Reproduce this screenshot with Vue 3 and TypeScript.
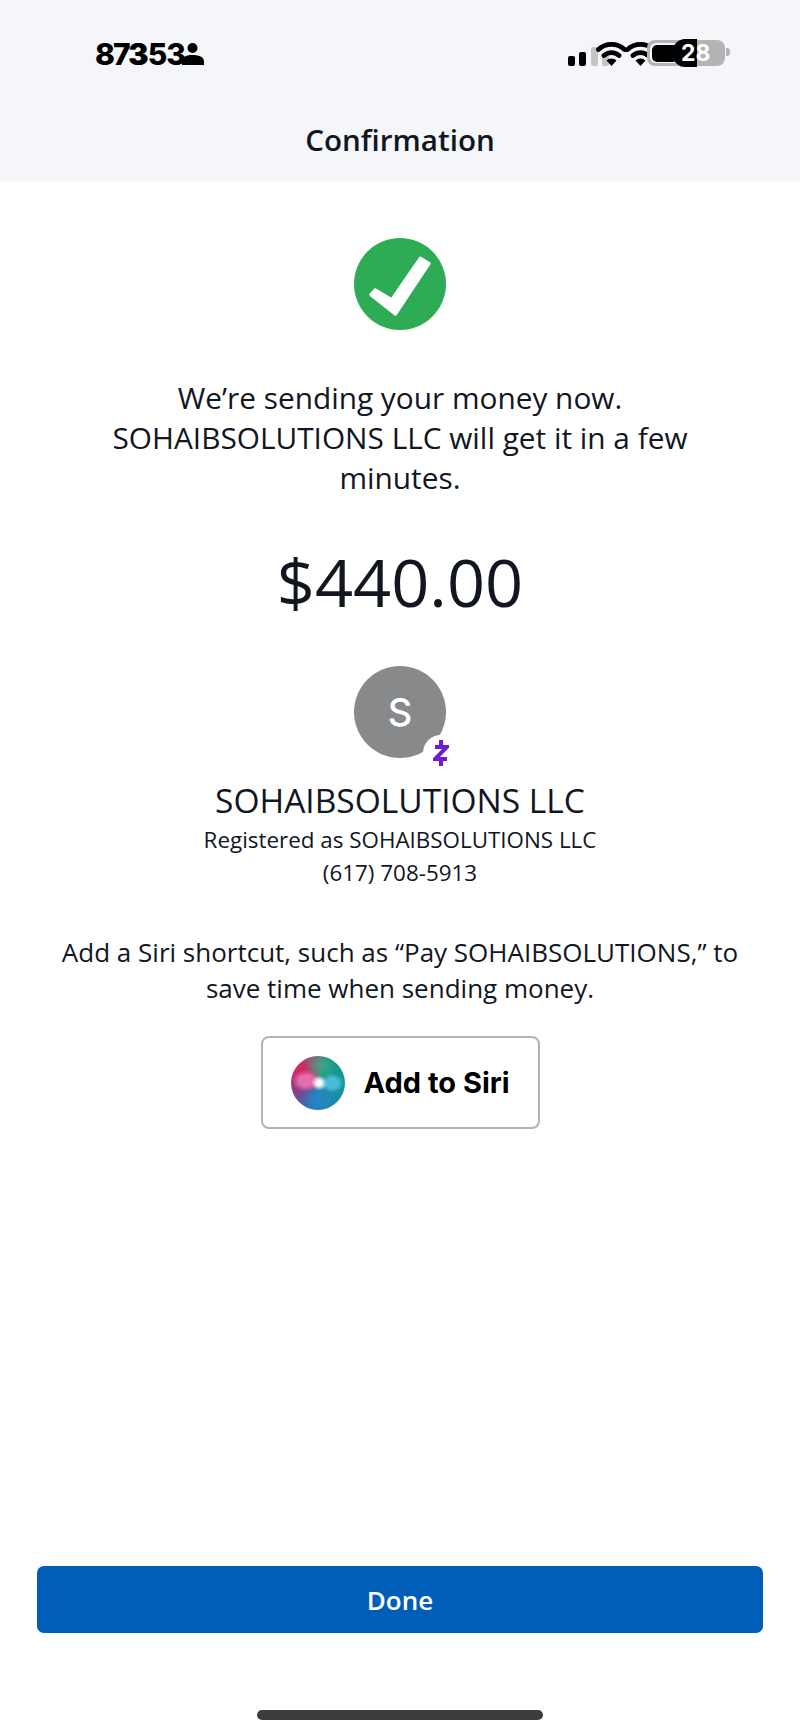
<template>
  <div class="screen">
    <!-- 顶部状态栏和标题 -->
    <header class="top">
      <div class="status">
        <div class="clock">
          <span class="time">873</span>
          <span class="time ghost">353</span>
          <svg class="person" viewBox="0 0 22 22" width="22" height="22">
            <circle cx="10.500" cy="5" r="5" fill="#000" />
            <path d="M0 22v-3c0-5 3-7 10.500-7S22 14 22 19v3z" fill="#000" />
          </svg>
        </div>
        <div class="indicators">
          <svg viewBox="0 0 41 19" width="41" height="19" class="signal">
            <rect x="0" y="9" width="7" height="10" rx="2" fill="#000" />
            <rect x="11" y="5" width="7" height="14" rx="2" fill="#000" />
            <rect x="23" y="0" width="7" height="19" rx="2" fill="#c4c4c4" />
            <rect x="34" y="8" width="7" height="11" rx="2" fill="#c4c4c4" />
          </svg>
          <svg v-for="left in wifiOffsets" :key="left" class="wifi" :style="{ left: left + 'px' }" viewBox="0 0 31 26" width="31" height="26">
            <path d="M2.500 9.500a19 19 0 0 1 26 0M8 15.500a11 11 0 0 1 15 0" fill="none" stroke="#000" stroke-width="4.800" stroke-linecap="round" />
            <path d="M10.500 20.500a7 7 0 0 1 10 0L15.500 26z" fill="#000" />
          </svg>
          <div class="battery">
            <div class="battery-inner"></div>
          </div>
          <div class="blob"></div>
          <div class="blob-round"></div>
          <span class="level">28</span>
          <div class="cap"></div>
        </div>
      </div>
      <h1 class="title">Confirmation</h1>
    </header>

    <main class="content">
      <svg class="check" viewBox="0 0 92 92" width="92" height="92">
        <circle cx="46" cy="46" r="46" fill="#2dac55" />
        <path d="M16.800 56.700L21.200 51.700L37.700 61.500L66.300 20L75.200 25.500L41.500 76.200z" fill="#fff" stroke="#fff" stroke-width="3" stroke-linejoin="round" />
      </svg>

      <p class="message">We’re sending your money now.<br />SOHAIBSOLUTIONS LLC will get it in a few<br />minutes.</p>

      <div class="amount">$440.00</div>

      <div class="avatar">
        <span class="initial">S</span>
        <div class="badge">
          <svg viewBox="0 0 16 28" width="16" height="28">
            <path d="M8 1v5M8 22v5M2 8h12L2 20h12" fill="none" stroke="#6d1ed4" stroke-width="4" />
          </svg>
        </div>
      </div>

      <div class="name">SOHAIBSOLUTIONS LLC</div>
      <div class="registered">Registered as SOHAIBSOLUTIONS LLC</div>
      <div class="phone">(617) 708-5913</div>

      <p class="siri-text">Add a Siri shortcut, such as “Pay SOHAIBSOLUTIONS,” to<br />save time when sending money.</p>

      <button class="siri-button">
        <span class="orb"></span>
        <span class="siri-label">Add to Siri</span>
      </button>
    </main>

    <footer class="bottom">
      <button class="done">Done</button>
      <div class="home"></div>
    </footer>
  </div>
</template>

<script setup lang="ts">
const wifiOffsets: number[] = [31, 60]
</script>

<style>
body {
  margin: 0;
  background: #ffffff;
}
</style>

<style scoped>
.screen {
  width: 800px;
  height: 1734px;
  display: flex;
  flex-direction: column;
  font-family: "Open Sans", "Noto Sans", sans-serif;
  color: #11161f;
  background: #ffffff;
  overflow: hidden;
}

.top {
  height: 181px;
  background: #f5f6fa;
  box-sizing: border-box;
  padding-top: 36px;
}

.status {
  display: flex;
  justify-content: space-between;
  padding: 0 70px 0 95px;
  height: 36px;
}

.clock {
  position: relative;
  width: 110px;
  height: 36px;
}

.time {
  position: absolute;
  left: 0;
  top: 0;
  font-family: Inter, "Liberation Sans", sans-serif;
  font-size: 30px;
  font-weight: 800;
  line-height: 36px;
  color: #000000;
  letter-spacing: -2px;
}

.time.ghost {
  left: 34px;
  letter-spacing: -1px;
}

.person {
  position: absolute;
  left: 87px;
  top: 7px;
}

.indicators {
  position: relative;
  width: 165px;
  height: 36px;
}

.signal {
  position: absolute;
  left: 3px;
  top: 11px;
}

.wifi {
  position: absolute;
  top: 4px;
}

.battery {
  position: absolute;
  left: 82px;
  top: 4px;
  width: 78px;
  height: 26px;
  border-radius: 8px;
  background: #b4b4b4;
}

.battery-inner {
  position: absolute;
  left: 3px;
  top: 3px;
  width: 40px;
  height: 20px;
  border-radius: 6px;
  background: #f5f6fa;
}

.level {
  position: absolute;
  left: 116px;
  top: 4px;
  font-family: Inter, "Liberation Sans", sans-serif;
  font-size: 23px;
  font-weight: 700;
  line-height: 26px;
  color: #ffffff;
}

.blob {
  position: absolute;
  left: 87px;
  top: 9px;
  width: 26px;
  height: 17px;
  border-radius: 5px;
  background: #000000;
}

.blob-round {
  position: absolute;
  left: 108px;
  top: 3px;
  width: 24px;
  height: 28px;
  border-radius: 12px 0 0 12px;
  background: #000000;
}

.cap {
  position: absolute;
  left: 161px;
  top: 12px;
  width: 4px;
  height: 8px;
  border-radius: 0 3px 3px 0;
  background: #b4b4b4;
}

.title {
  margin: 48px 0 0;
  text-align: center;
  font-size: 29.600px;
  line-height: 40px;
  font-weight: 600;
}

.content {
  flex: 1;
  display: flex;
  flex-direction: column;
  align-items: center;
  padding-top: 57px;
}

.check {
  display: block;
}

.message {
  margin: 48px 0 0;
  font-size: 29.800px;
  line-height: 40px;
  text-align: center;
}

.amount {
  margin-top: 40px;
  font-size: 66.700px;
  line-height: 88px;
}

.avatar {
  position: relative;
  width: 92px;
  height: 92px;
  margin-top: 40px;
  border-radius: 50%;
  background: #87898b;
  display: flex;
  align-items: center;
  justify-content: center;
}

.initial {
  font-family: Inter, "Liberation Sans", sans-serif;
  font-size: 38px;
  font-weight: 500;
  color: #ffffff;
}

.badge {
  position: absolute;
  left: 69px;
  top: 69px;
  width: 36px;
  height: 36px;
  border-radius: 50%;
  background: #ffffff;
  display: flex;
  align-items: center;
  justify-content: center;
}

.name {
  margin-top: 20px;
  font-size: 33.500px;
  line-height: 44px;
}

.registered,
.phone {
  font-size: 22.400px;
  line-height: 33px;
}

.registered {
  margin-top: 1px;
}

.siri-text {
  margin: 45px 0 0;
  font-size: 26px;
  line-height: 36px;
  text-align: center;
}

.siri-button {
  margin-top: 30px;
  width: 279px;
  height: 93px;
  display: flex;
  align-items: center;
  padding: 0 0 0 28px;
  box-sizing: border-box;
  background: #ffffff;
  border: 2px solid #b3b3b3;
  border-radius: 8px;
}

.orb {
  width: 54px;
  height: 54px;
  border-radius: 50%;
  background:
    radial-gradient(circle at 52% 50%, #ffffff 0 6%, rgba(255, 255, 255, 0) 20%),
    radial-gradient(ellipse 26% 20% at 28% 46%, rgba(236, 120, 180, 0.85) 0 50%, rgba(236, 120, 180, 0) 100%),
    radial-gradient(ellipse 22% 18% at 76% 50%, rgba(80, 195, 225, 0.85) 0 50%, rgba(80, 195, 225, 0) 100%),
    radial-gradient(ellipse 30% 28% at 50% 80%, rgba(40, 140, 200, 0.85) 0, rgba(40, 140, 200, 0) 100%),
    radial-gradient(ellipse 30% 28% at 55% 18%, rgba(70, 170, 140, 0.8) 0, rgba(70, 170, 140, 0) 100%),
    conic-gradient(from 20deg, #129c80 0deg, #1a93a6 90deg, #2179b8 170deg, #8c3f88 230deg, #d8255f 290deg, #5f7478 350deg, #129c80 360deg);
}

.siri-label {
  margin-left: 19px;
  font-family: Inter, "Liberation Sans", sans-serif;
  font-size: 29px;
  font-weight: 700;
  color: #000000;
}

.bottom {
  display: flex;
  flex-direction: column;
  align-items: center;
  padding-bottom: 14px;
}

.done {
  width: 726px;
  height: 67px;
  border: none;
  border-radius: 7px;
  background: #005eb8;
  color: #ffffff;
  font-family: "Open Sans", "Noto Sans", sans-serif;
  font-size: 26px;
  font-weight: 600;
}

.home {
  width: 286px;
  height: 10px;
  margin-top: 77px;
  border-radius: 5px;
  background: #3c3c3c;
}
</style>
